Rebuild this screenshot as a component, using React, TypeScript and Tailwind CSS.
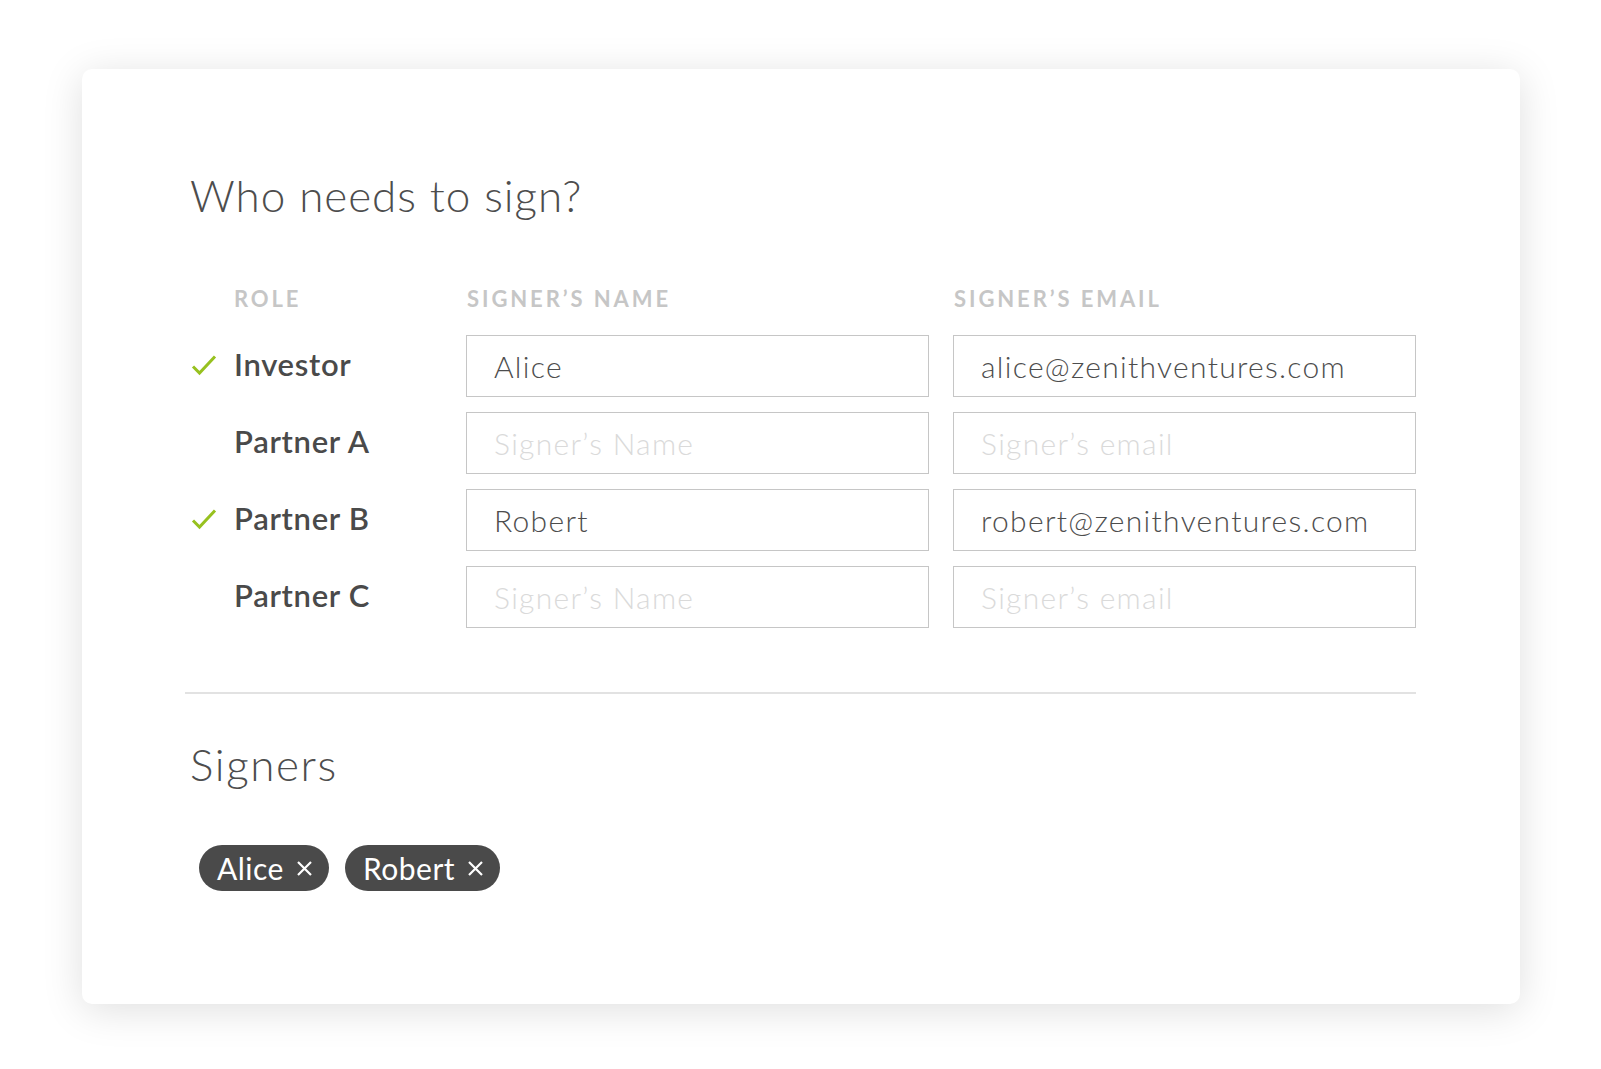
import React from "react";

type Row = { role: string; name: string; email: string; done: boolean };

const rows: Row[] = [
  { role: "Investor", name: "Alice", email: "alice@zenithventures.com", done: true },
  { role: "Partner A", name: "", email: "", done: false },
  { role: "Partner B", name: "Robert", email: "robert@zenithventures.com", done: true },
  { role: "Partner C", name: "", email: "", done: false },
];

function Check() {
  return (
    <svg width="26" height="22" viewBox="0 0 26 22" fill="none">
      <path d="M2 12.5 L8.5 19 L24 2.5" stroke="#97c11f" strokeWidth="3" strokeLinecap="butt" strokeLinejoin="miter" />
    </svg>
  );
}

function Chip({ label }: { label: string }) {
  return (
    <div className="flex h-[46px] items-center gap-[12px] rounded-full bg-[#4a4a4a] pl-[18px] pr-[16px] text-[30px] leading-none text-white">
      <span className="tracking-[0.5px]">{label}</span>
      <svg width="17" height="17" viewBox="0 0 17 17" fill="none">
        <path d="M2 2 L15 15 M15 2 L2 15" stroke="#ffffff" strokeWidth="2.2" />
      </svg>
    </div>
  );
}

function Field({ value, placeholder }: { value: string; placeholder: string }) {
  return (
    <input
      readOnly
      value={value}
      placeholder={placeholder}
      className="h-[62px] w-full border border-[#c6c6c6] bg-white pl-[27px] text-[30px] font-light tracking-[1.3px] text-[#4d4d4d] outline-none placeholder:text-[#dadada]"
    />
  );
}

export default function App() {
  return (
    <div className="min-h-screen bg-white pl-[82px] pt-[69px] font-['Lato',sans-serif]">
      <div className="h-[935px] w-[1438px] rounded-[10px] bg-white pl-[103px] pt-[101px] shadow-[0_6px_40px_rgba(0,0,0,0.13)]">
        <div className="w-[1231px]">
          <h1 className="ml-[5px] text-[44px] font-light leading-[50px] tracking-[0.95px] text-[#4d4d4d]">
            Who needs to sign?
          </h1>

          <div className="mt-[67px] grid grid-cols-[257px_463px_463px] gap-x-6 gap-y-[15px]">
            <div className="pl-[49px] text-[22px] font-bold leading-[24px] tracking-[2.9px] text-[#c6c6c6]">ROLE</div>
            <div className="pl-[1px] text-[22px] font-bold leading-[24px] tracking-[2.9px] text-[#c6c6c6]">SIGNER’S NAME</div>
            <div className="pl-[1px] text-[22px] font-bold leading-[24px] tracking-[2.9px] text-[#c6c6c6]">SIGNER’S EMAIL</div>

            {rows.map((r, i) => (
              <React.Fragment key={r.role}>
                <div className={`flex items-center pb-[3px] pl-[6px] ${i === 0 ? "mt-[9px]" : ""}`}>
                  <div className="w-[43px]">{r.done && <Check />}</div>
                  <span className="text-[31px] font-semibold tracking-[0.7px] text-[#4a4a4a]">{r.role}</span>
                </div>
                <div className={i === 0 ? "mt-[9px]" : ""}>
                  <Field value={r.name} placeholder="Signer’s Name" />
                </div>
                <div className={i === 0 ? "mt-[9px]" : ""}>
                  <Field value={r.email} placeholder="Signer’s email" />
                </div>
              </React.Fragment>
            ))}
          </div>

          <div className="mt-[64px] h-[2px] bg-[#e2e2e2]" />

          <h2 className="ml-[5px] mt-[45px] text-[44px] font-light leading-[50px] tracking-[1.6px] text-[#4d4d4d]">
            Signers
          </h2>

          <div className="ml-[14px] mt-[56px] flex gap-4">
            <Chip label="Alice" />
            <Chip label="Robert" />
          </div>
        </div>
      </div>
    </div>
  );
}
